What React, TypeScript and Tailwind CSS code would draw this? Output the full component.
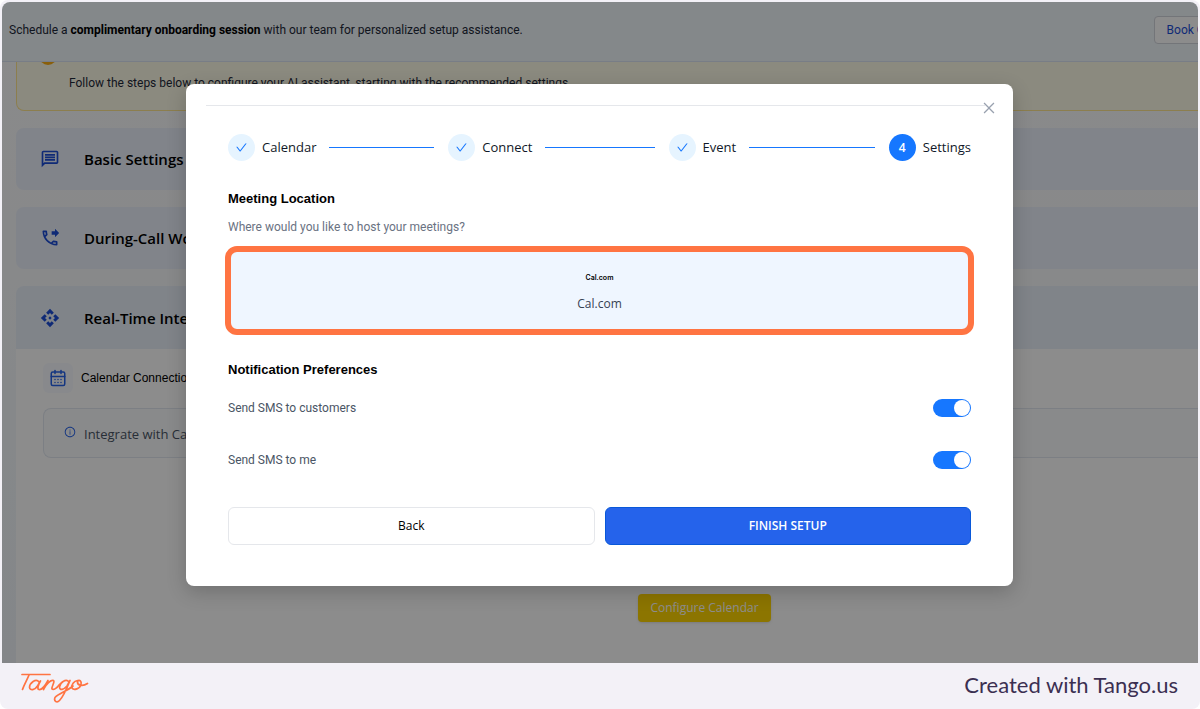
import { useState, type ComponentType } from "react";
import { CalendarDays } from "lucide-react";
import { MdOutlineMessage, MdOutlinePhoneForwarded, MdApi } from "react-icons/md";
import { AiOutlineCheck, AiOutlineClose, AiOutlineInfoCircle } from "react-icons/ai";

const steps = ["Calendar", "Connect", "Event", "Settings"];
const currentStep = 3;

const sections = [
  { title: "Basic Settings", icon: MdOutlineMessage },
  { title: "During-Call Workflows", icon: MdOutlinePhoneForwarded },
];

function TangoLogo() {
  return (
    <svg
      viewBox="0 -1 70 34"
      className="h-[34px] w-[70px]"
      fill="none"
      stroke="#ff7442"
      strokeWidth="1.7"
      strokeLinecap="round"
      strokeLinejoin="round"
      role="img"
      aria-label="Tango"
    >
      <path d="M2 4.500H30" />
      <path d="M9 5C7 10 4 15 2.500 19.500" />
      <path d="M19 12C16 8 9.500 13 9.500 17.500C10 21 15 20 17.500 16L20.500 11C18 15 17 19 19 19.500C21.500 20 25 16 28 10.500L23.500 19.500C26 14 31 9.500 33.500 10.500C35.500 11.500 31 17 32 19C33.500 20.500 37 18 39.500 14.500" />
      <path d="M49 12C46 8 39.500 13 39.500 17C39.500 21 44 19.500 47 16L50 10.500C47 18 43 27 39.500 30.500C37 33 33.500 31.500 35 27.500C38 24 48 20.500 53 16" />
      <path d="M57.500 10.500C54 11 51 15 52 18C54 21 60 18.500 61 14.500C62 11 59 9 57.500 11.500C57 15 62 17 67.500 13.500" />
    </svg>
  );
}

function SectionHeader({ title, icon: Icon }: { title: string; icon: ComponentType<{ className?: string }> }) {
  return (
    <h2 className="flex h-[62px] items-center gap-6 px-6 text-[15px] font-semibold text-black">
      <Icon className="size-5 text-[#1d4ed8]" />
      {title}
    </h2>
  );
}

function SetupPage() {
  return (
    <div className="flex h-full w-full flex-col bg-linear-to-b from-[#fcfcfd] to-[#f0f5fa]">
      <header className="flex h-[60px] shrink-0 items-center justify-between border-b border-[#dbe4f5] bg-[#f0f7fb] pb-1 pl-[7px] font-['Roboto',sans-serif] text-xs text-gray-800">
        <p>
          Schedule a <b className="text-black">complimentary onboarding session</b> with our team for personalized
          setup assistance.
        </p>
        <button type="button" className="-mr-8 h-7 rounded border border-gray-300 bg-white px-3 text-[#1d4ed8]">
          Book Call
        </button>
      </header>
      <div className="min-h-0 flex-1 overflow-hidden pl-[14px]">
        <div className="-mt-6 mb-[17px] flex h-[73px] gap-3 rounded-l-lg border border-r-0 border-[#ffe58f] bg-[#fefce8] pl-[22px] font-['Roboto',sans-serif] text-xs">
          <div className="mt-2 size-[18px] rounded-full bg-[#faad14]" />
          <div>
            <p className="mt-1 text-[15px] leading-5 font-semibold">Simply Test Setup</p>
            <p className="mt-3 text-gray-800">
              Follow the steps below to configure your AI assistant, starting with the recommended settings.
            </p>
          </div>
        </div>
        {sections.map((section) => (
          <section key={section.title} className="mb-[17px] rounded-l-lg bg-[#ebf1fb]">
            <SectionHeader {...section} />
          </section>
        ))}
        <section className="h-full rounded-tl-lg bg-white">
          <div className="rounded-tl-lg bg-[#e9f0f9] pt-px">
            <SectionHeader title="Real-Time Integrations" icon={MdApi} />
          </div>
          <div className="pl-[27px] pt-[14px]">
            <div className="flex items-center gap-2 font-['Liberation_Sans',sans-serif] text-xs">
              <div className="flex size-[30px] items-center justify-center rounded-md bg-[#f8faff]">
                <CalendarDays className="size-[18px] text-[#2563eb]" />
              </div>
              Calendar Connection
            </div>
            <div className="mt-[15px] flex h-[50px] gap-2 rounded-l-lg border border-r-0 border-[#e2e8f0] bg-[#fafbfd] pl-5 text-[13px] text-gray-600">
              <AiOutlineInfoCircle className="mt-[17px] size-3 text-[#2563eb]" />
              <p className="mt-4">Integrate with Calendar</p>
            </div>
            <div className="mt-[136px] flex justify-center pl-[168px]">
              <button
                type="button"
                className="h-7 rounded bg-[#ffd600] px-3 text-xs text-white shadow-sm"
              >
                Configure Calendar
              </button>
            </div>
          </div>
        </section>
      </div>
    </div>
  );
}

function Stepper() {
  return (
    <ol className="flex items-center gap-[14px] text-[13px] text-gray-900">
      {steps.map((step, index) => (
        <li key={step} className={index < currentStep ? "flex flex-1 items-center gap-[13px]" : "flex items-center"}>
          <span className="flex items-center gap-[7px]">
            {index < currentStep ? (
              <span className="flex size-[27px] items-center justify-center rounded-full bg-[#e6f4ff]">
                <AiOutlineCheck className="size-[13px] text-[#1677ff]" />
              </span>
            ) : (
              <span className="flex size-[27px] items-center justify-center rounded-full bg-[#1677ff] text-xs font-semibold text-white">
                {index + 1}
              </span>
            )}
            {step}
          </span>
          {index < currentStep && <span className="h-px flex-1 bg-[#1677ff]" />}
        </li>
      ))}
    </ol>
  );
}

function SwitchRow({ label }: { label: string }) {
  const [checked, setChecked] = useState(true);

  return (
    <label className="flex h-5 items-center justify-between font-['Roboto',sans-serif] text-xs text-gray-600">
      {label}
      <input
        type="checkbox"
        role="switch"
        checked={checked}
        onChange={() => setChecked(!checked)}
        className="flex h-[18px] w-[38px] appearance-none items-center rounded-full bg-gray-300 px-px before:size-4 before:rounded-full before:bg-white checked:justify-end checked:bg-[#1677ff]"
      />
    </label>
  );
}

function SetupDialog() {
  return (
    <div
      role="dialog"
      aria-label="Calendar setup"
      className="relative w-full max-w-[827px] rounded-lg bg-white px-[42px] pb-[41px] pt-[21px] shadow-[0_6px_20px_rgba(0,0,0,0.2)]"
    >
      <hr className="-ml-[22px] -mr-[14px] border-gray-200" />
      <button type="button" aria-label="Close" className="absolute right-4 top-4 text-gray-400">
        <AiOutlineClose className="size-4" />
      </button>

      <div className="mt-7">
        <Stepper />
      </div>

      <h3 className="mt-7 font-['Liberation_Sans',sans-serif] text-[13px] leading-5 font-bold text-black">
        Meeting Location
      </h3>
      <p className="mt-2 font-['Roboto',sans-serif] text-xs leading-5 text-gray-500">
        Where would you like to host your meetings?
      </p>
      <button
        type="button"
        className="-mx-[3px] mt-[9px] flex h-[89px] w-[calc(100%+6px)] flex-col items-center justify-center gap-3 rounded-xl border-6 border-[#ff7442] bg-[#eff6ff] pt-1 text-gray-700"
      >
        <span className="font-['Inter',sans-serif] text-[7px] font-semibold text-black">Cal.com</span>
        <span className="text-xs">Cal.com</span>
      </button>

      <h3 className="mt-[25px] font-['Liberation_Sans',sans-serif] text-[13px] leading-5 font-bold text-black">
        Notification Preferences
      </h3>
      <div className="mt-[18px] flex flex-col gap-8">
        <SwitchRow label="Send SMS to customers" />
        <SwitchRow label="Send SMS to me" />
      </div>

      <div className="mt-[37px] grid grid-cols-2 gap-[10px] text-xs">
        <button type="button" className="h-[38px] rounded-md border border-gray-200 bg-white font-medium text-black">
          Back
        </button>
        <button
          type="button"
          className="h-[38px] rounded-md border border-[#0958d9] bg-[#2563eb] font-semibold text-white"
        >
          FINISH SETUP
        </button>
      </div>
    </div>
  );
}

export default function App() {
  return (
    <div className="flex h-screen flex-col overflow-hidden rounded-lg bg-[#f3f1f7] font-['Open_Sans','Noto_Sans',sans-serif]">
      <main className="relative mx-[2px] mt-[2px] min-h-0 flex-1 overflow-hidden rounded-t-lg">
        <SetupPage />
        <div className="absolute inset-0 flex items-start justify-center bg-black/45 pr-px pt-[82px]">
          <SetupDialog />
        </div>
      </main>
      <footer className="flex h-[46px] shrink-0 items-center justify-between pl-5 pr-[22px]">
        <TangoLogo />
        <p className="pb-1 font-['Lato',sans-serif] text-[22px] text-[#3b2f51]">Created with Tango.us</p>
      </footer>
    </div>
  );
}
